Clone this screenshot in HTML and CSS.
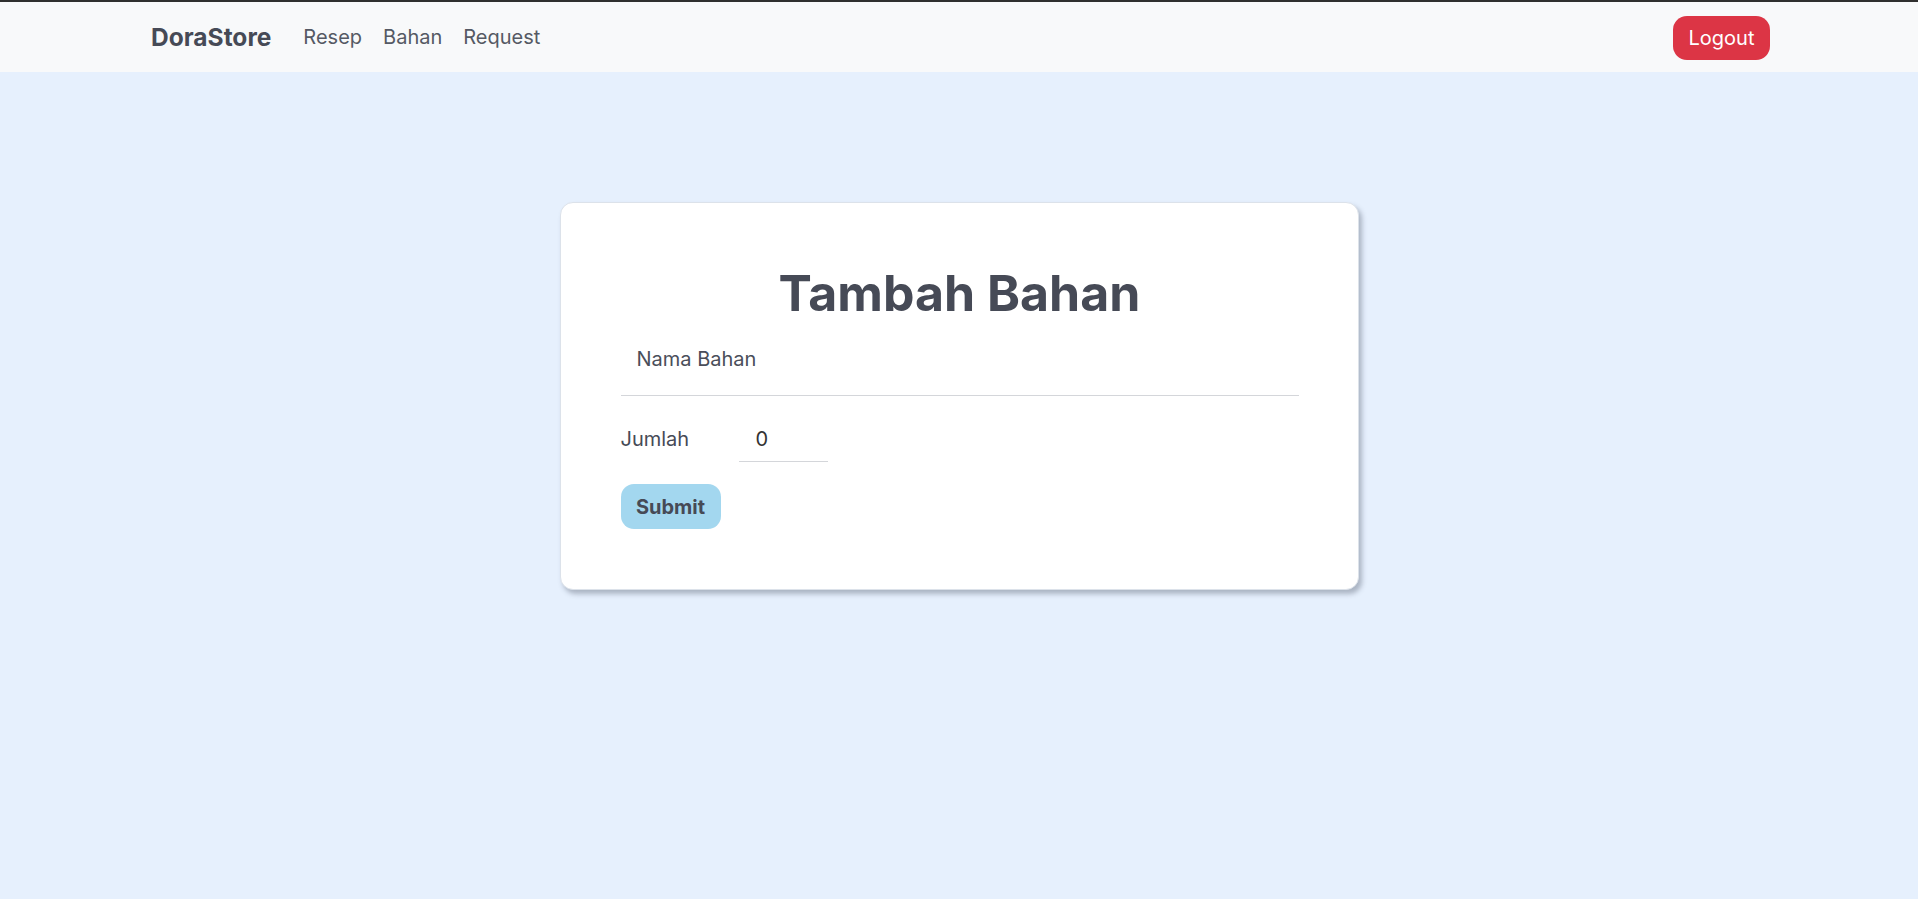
FILE: index.html
```
<!DOCTYPE html>
<html lang="id">
<head>
<meta charset="utf-8">
<title>DoraStore - Tambah Bahan</title>
<link rel="stylesheet" href="styles.css">
</head>
<body>
<nav class="navbar">
  <div class="nav-inner">
    <div class="nav-left">
      <a class="brand" href="#">DoraStore</a>
      <a class="nav-link" href="#">Resep</a>
      <a class="nav-link" href="#">Bahan</a>
      <a class="nav-link" href="#">Request</a>
    </div>
    <button class="btn-logout" type="button">Logout</button>
  </div>
</nav>
<main class="main">
  <div class="card">
    <h1 class="title">Tambah Bahan</h1>
    <form class="form">
      <input class="input-nama" type="text" placeholder="Nama Bahan">
      <div class="row-jumlah">
        <label class="label-jumlah">Jumlah</label>
        <input class="input-jumlah" type="number" value="0">
      </div>
      <button class="btn-submit" type="button">Submit</button>
    </form>
  </div>
</main>
</body>
</html>
```
FILE: styles.css
```
* { box-sizing: border-box; }
html, body { margin: 0; padding: 0; }
body {
  background: #e6f0fd;
  font-family: Inter, "Noto Sans", sans-serif;
  color: #464a56;
  min-height: 899px;
}
.navbar {
  background: #f8f9fa;
  border-top: 2px solid #2f2f2f;
  height: 72px;
}
.nav-inner {
  height: 100%;
  padding: 0 148px 0 151px;
  display: flex;
  align-items: center;
  justify-content: space-between;
}
.nav-left {
  display: flex;
  align-items: center;
}
.brand {
  font-size: 24.5px;
  font-weight: 700;
  color: #464a56;
  text-decoration: none;
  margin-right: 32px;
}
.nav-link {
  font-size: 20px;
  color: #555964;
  text-decoration: none;
  margin-right: 21px;
}
.btn-logout {
  background: #dc3545;
  color: #fff;
  border: none;
  border-radius: 14px;
  font-family: Inter, "Noto Sans", sans-serif;
  font-size: 20px;
  width: 97px;
  height: 44px;
  padding: 0;
  margin-top: 2px;
}
.main {
  display: flex;
  justify-content: center;
  padding-top: 130px;
}
.card {
  width: 799px;
  background: #fff;
  border: 1px solid #dce2ea;
  border-radius: 13px;
  box-shadow: 3px 4px 5px rgba(60, 70, 90, 0.35);
  padding: 60px 59px 60px 60px;
}
.title {
  margin: 0 0 8px;
  text-align: center;
  font-size: 50px;
  line-height: 60px;
  font-weight: 700;
  color: #464a56;
}
.form {
  display: flex;
  flex-direction: column;
  align-items: flex-start;
}
.input-nama {
  width: 100%;
  border: none;
  border-bottom: 1px solid #d4d6da;
  outline: none;
  font-family: Inter, "Noto Sans", sans-serif;
  font-size: 20px;
  line-height: 27px;
  padding: 15px 16px 22px;
  color: #464a56;
  background: transparent;
}
.input-nama::placeholder { color: #4a4e5a; opacity: 1; }
.row-jumlah {
  display: flex;
  align-items: flex-start;
  margin-top: 30px;
}
.label-jumlah {
  font-size: 20px;
  line-height: 27px;
  width: 118px;
}
.input-jumlah {
  width: 89px;
  border: none;
  border-bottom: 1px solid #d4d6da;
  outline: none;
  font-family: Inter, "Noto Sans", sans-serif;
  font-size: 20px;
  line-height: 27px;
  padding: 0 0 8px 17px;
  color: #333;
  background: transparent;
  -moz-appearance: textfield;
}
.input-jumlah::-webkit-inner-spin-button,
.input-jumlah::-webkit-outer-spin-button { -webkit-appearance: none; margin: 0; }
.btn-submit {
  margin-top: 22px;
  background: #a3d7ef;
  border: none;
  border-radius: 13px;
  width: 100px;
  height: 45px;
  padding: 0;
  font-family: Inter, "Noto Sans", sans-serif;
  font-size: 20px;
  font-weight: 700;
  color: #464a56;
}
```
